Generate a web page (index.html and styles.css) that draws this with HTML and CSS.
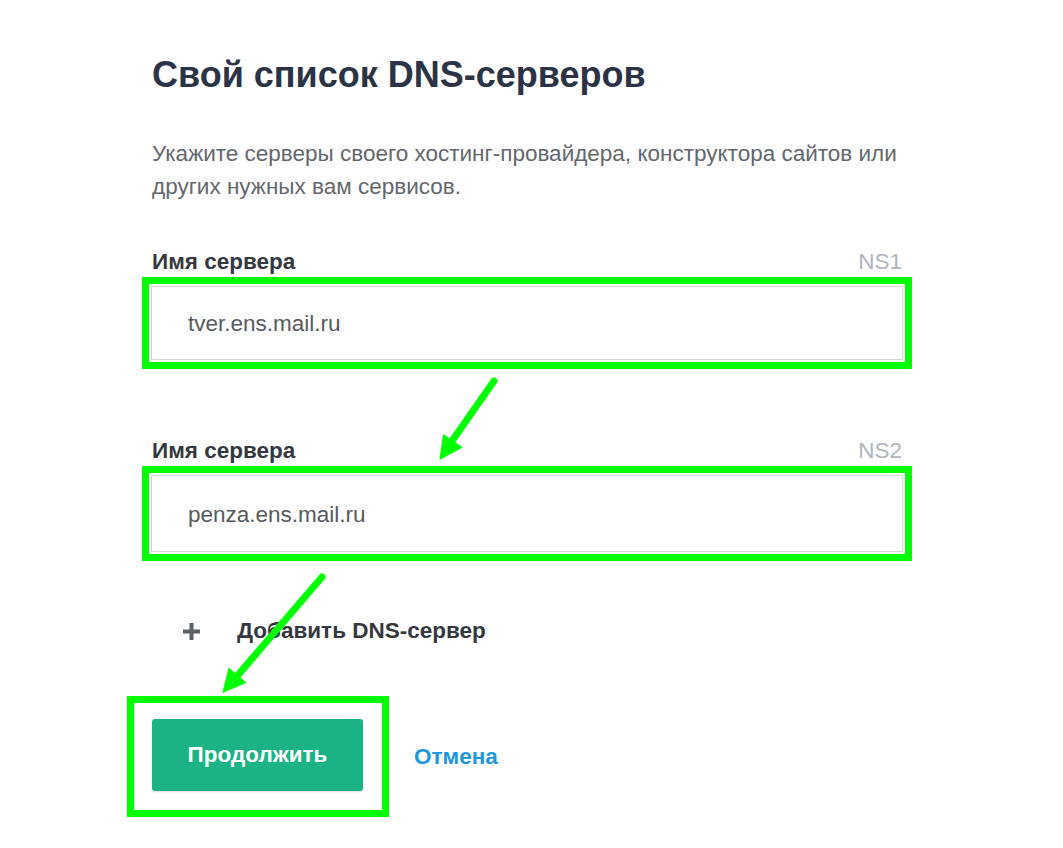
FILE: index.html
```html
<!DOCTYPE html>
<html lang="ru">

<head>
    <meta charset="UTF-8">
    <meta name="viewport" content="width=device-width, initial-scale=1.0">
    <title>Свой список DNS-серверов</title>
    <link rel="stylesheet" href="styles.css">
</head>

<body>
    <main class="dns-form">
        <h1 class="title">Свой список DNS-серверов</h1>
        <p class="hint">Укажите серверы своего хостинг-провайдера, конструктора сайтов или<br>других нужных вам сервисов.</p>

        <div class="field">
            <div class="field-head">
                <label>Имя сервера</label>
                <span class="ns">NS1</span>
            </div>
            <div class="mark mark-field">
                <div class="input">tver.ens.mail.ru</div>
            </div>
        </div>

        <div class="field field-second">
            <div class="field-head">
                <label>Имя сервера</label>
                <span class="ns">NS2</span>
            </div>
            <div class="mark mark-field">
                <div class="input input-tall">penza.ens.mail.ru</div>
            </div>
        </div>

        <div class="add-server">
            <svg class="plus" width="17" height="17" viewBox="0 0 17 17">
                <path d="M8.5 0v17M0 8.5h17" stroke="#5b5f66" stroke-width="4" />
            </svg>
            <span>Добавить DNS-сервер</span>
        </div>

        <div class="actions">
            <div class="mark mark-button">
                <button class="submit">Продолжить</button>
            </div>
            <a class="cancel">Отмена</a>
        </div>
    </main>

    <!-- arrows drawn over the form -->
    <svg class="arrows" width="1063" height="848" viewBox="0 0 1063 848">
        <g stroke="#00ff00" stroke-width="7" stroke-linecap="round" fill="#00ff00">
            <line x1="494" y1="381" x2="452" y2="441" />
            <polygon points="440,459 443.5,434.6 461.7,447.2" stroke-width="1" />
            <line x1="322" y1="577" x2="238" y2="675" />
            <polygon points="223,692 229,668.2 245.6,682.4" stroke-width="1" />
        </g>
    </svg>
</body>

</html>
```

FILE: styles.css
```css
body {
    margin: 0;
    background: #fff;
    font-family: 'Liberation Sans', Arial, sans-serif;
    position: relative;
    min-height: 848px;
}

.dns-form {
    width: 750px;
    padding: 55px 0 0 152px;
}

.title {
    margin: 0;
    font-size: 36px;
    line-height: 40px;
    font-weight: 700;
    color: #2b3346;
}

.hint {
    margin: 42px 0 0;
    font-size: 22.5px;
    line-height: 33px;
    color: #63676d;
}

.field {
    margin-top: 46px;
}

.field-second {
    margin-top: 69px;
}

.field-head {
    display: flex;
    justify-content: space-between;
    align-items: baseline;
    line-height: 26px;
    font-size: 22.5px;

    label {
        font-weight: 700;
        color: #34383f;
    }

    .ns {
        color: #b0b5bd;
    }
}

.mark {
    border: 7px solid #00ff00;
}

.mark-field {
    margin: 2px -10px 0;
    padding: 2px;
}

.input {
    border: 1px solid #d3d6dc;
    padding: 24px 36px 22px;
    font-size: 22.5px;
    line-height: 26px;
    color: #555a60;
}

.input-tall {
    padding-top: 26px;
    padding-bottom: 23px;
}

.add-server {
    display: flex;
    align-items: center;
    margin-top: 57px;
    padding-left: 31px;
    font-size: 22.5px;
    line-height: 26px;
    font-weight: 700;
    color: #34383f;

    .plus {
        margin-right: 37px;
    }
}

.actions {
    display: flex;
    align-items: center;
    margin-top: 52px;
}

.mark-button {
    margin-left: -25px;
    padding: 16px 19px 19px 18px;
}

.submit {
    display: block;
    width: 211px;
    height: 72px;
    border: 0;
    border-radius: 3px;
    background: #1bb385;
    color: #fff;
    font-family: inherit;
    font-size: 22.5px;
    line-height: 26px;
    font-weight: 700;
    box-shadow: 0 1px 2px rgba(0, 0, 0, .15);
}

.cancel {
    margin-left: 25px;
    font-size: 22.5px;
    line-height: 26px;
    font-weight: 700;
    color: #1b98de;
}

.arrows {
    position: absolute;
    left: 0;
    top: 0;
    pointer-events: none;
}
```
